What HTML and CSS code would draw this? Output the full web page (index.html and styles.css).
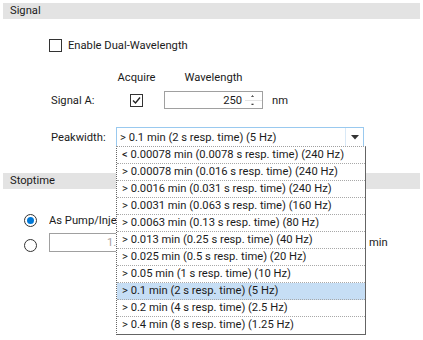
FILE: index.html
```html
<!DOCTYPE html>
<html lang="en">
<head>
    <meta charset="UTF-8">
    <title>Signal</title>
    <link rel="stylesheet" href="styles.css">
</head>
<body>
    <div class="section-head">Signal</div>
    <div class="signal-body">
        <div class="check-row">
            <span class="box"></span>
            <span class="check-label">Enable Dual-Wavelength</span>
        </div>

        <div class="col-heads">
            <span class="lbl"></span>
            <span class="acq">Acquire</span>
            <span class="wl">Wavelength</span>
        </div>

        <div class="sig-row">
            <span class="lbl">Signal A:</span>
            <span class="acq">
                <span class="box">
                    <svg width="11" height="11" viewBox="0 0 11 11"><path d="M2 5.5 L4.5 8 L9 2.5" fill="none" stroke="#222" stroke-width="1.4"/></svg>
                </span>
            </span>
            <div class="spin">
                <span class="spin-val">250</span>
                <span class="spin-btns">
                    <svg width="18" height="16" viewBox="0 0 18 16"><path d="M7.5 4.5 L8.5 3.5 L9.5 4.5 Z" fill="#333" stroke="#333" stroke-width="0.6"/><line x1="1" y1="8.5" x2="18" y2="8.5" stroke="#e3e3e3"/><path d="M7.5 12 L8.5 13 L9.5 12 Z" fill="#333" stroke="#333" stroke-width="0.6"/></svg>
                </span>
            </div>
            <span class="unit">nm</span>
        </div>

        <div class="peak-row">
            <span class="lbl">Peakwidth:</span>
            <div class="combo">
                <span class="combo-val">&gt; 0.1 min (2 s resp. time) (5 Hz)</span>
                <span class="combo-btn">
                    <svg width="8" height="5" viewBox="0 0 8 5"><path d="M0 0 H8 L4 4.5 Z" fill="#333"/></svg>
                </span>
                <ul class="combo-list">
                    <li>&lt; 0.00078 min (0.0078 s resp. time) (240 Hz)</li>
                    <li>&gt; 0.00078 min (0.016 s resp. time) (240 Hz)</li>
                    <li>&gt; 0.0016 min (0.031 s resp. time) (240 Hz)</li>
                    <li>&gt; 0.0031 min (0.063 s resp. time) (160 Hz)</li>
                    <li>&gt; 0.0063 min (0.13 s resp. time) (80 Hz)</li>
                    <li>&gt; 0.013 min (0.25 s resp. time) (40 Hz)</li>
                    <li>&gt; 0.025 min (0.5 s resp. time) (20 Hz)</li>
                    <li>&gt; 0.05 min (1 s resp. time) (10 Hz)</li>
                    <li class="selected">&gt; 0.1 min (2 s resp. time) (5 Hz)</li>
                    <li>&gt; 0.2 min (4 s resp. time) (2.5 Hz)</li>
                    <li>&gt; 0.4 min (8 s resp. time) (1.25 Hz)</li>
                </ul>
            </div>
        </div>
    </div>

    <div class="section-head stop-head">Stoptime</div>
    <div class="stop-body">
        <div class="radio-row">
            <span class="radio on"></span>
            <span class="radio-label">As Pump/Injector</span>
        </div>
        <div class="radio-row time-row">
            <span class="radio"></span>
            <div class="time-box"><span class="time-val">1.00</span></div>
            <span class="unit">min</span>
        </div>
    </div>
</body>
</html>
```

FILE: styles.css
```css
html {
    height: 100%;
}

body {
    margin: 0;
    min-height: 100%;
    padding-top: 3px;
    box-sizing: border-box;
    background-color: white;
    font-family: Roboto, "Liberation Sans", sans-serif;
    font-size: 11.2px;
    color: #1b1b1b;
}

.section-head {
    margin: 0 3px;
    height: 16px;
    line-height: 16px;
    padding-left: 7px;
    background-color: #e3e3e3;
}

.signal-body {
    padding-left: 49px;
}

.box {
    display: inline-flex;
    align-items: center;
    justify-content: center;
    width: 13px;
    height: 13px;
    box-sizing: border-box;
    border: 1px solid #333;
    background-color: white;
}

.check-row {
    display: flex;
    align-items: center;
    height: 13px;
    margin-top: 20px;
    line-height: 13px;
}

.check-label {
    margin-left: 6px;
}

.lbl {
    width: 68px;
    padding-left: 2px;
    box-sizing: border-box;
}

.acq {
    width: 39px;
    display: flex;
    justify-content: center;
}

.col-heads {
    display: flex;
    height: 14px;
    line-height: 14px;
    margin-top: 19px;
}

.wl {
    width: 99px;
    margin-left: 8px;
    text-align: center;
}

.sig-row {
    display: flex;
    align-items: center;
    height: 18px;
    margin-top: 6px;
}

.spin {
    display: flex;
    align-items: center;
    width: 99px;
    height: 18px;
    margin-left: 8px;
    box-sizing: border-box;
    border: 1px solid #a0a0a0;
}

.spin-val {
    flex: 1;
    text-align: right;
    padding-right: 2px;
}

.spin-btns {
    display: flex;
    width: 18px;
    height: 16px;
}

.unit {
    margin-left: 9px;
}

.peak-row {
    display: flex;
    align-items: center;
    height: 20px;
    margin-top: 18px;
}

.peak-row .lbl {
    width: 67px;
}

.combo {
    position: relative;
    display: flex;
    align-items: center;
    width: 248px;
    height: 20px;
    box-sizing: border-box;
    border: 1px solid #99c9ef;
}

.combo-val {
    flex: 1;
    padding-left: 3px;
}

.combo-btn {
    display: flex;
    align-items: center;
    justify-content: center;
    width: 17px;
    height: 18px;
    border-left: 1px solid #d9e9f7;
}

.combo-list {
    position: absolute;
    top: 100%;
    left: -1px;
    z-index: 2;
    width: 250px;
    margin: 0;
    padding: 0;
    list-style: none;
    box-sizing: border-box;
    background-color: white;
    border: 1px solid #646464;
    border-top: 1px dotted #a0a0a0;
    border-left-style: dotted;
}

.combo-list li {
    height: 17px;
    line-height: 16px;
    padding-left: 5px;
    box-sizing: border-box;
    border-bottom: 1px dotted #a8a8a8;
    white-space: nowrap;
}

.combo-list li:last-child {
    border-bottom: none;
}

.combo-list li.selected {
    background-color: #c6def5;
}

.stop-head {
    margin-top: 26px;
}

.stop-body {
    padding-left: 24px;
}

.radio-row {
    display: flex;
    align-items: center;
    height: 13px;
    line-height: 13px;
    margin-top: 25px;
}

.radio {
    position: relative;
    flex: none;
    width: 13px;
    height: 13px;
    box-sizing: border-box;
    border: 1px solid #333;
    border-radius: 50%;
}

.radio.on::after {
    content: "";
    position: absolute;
    left: 2px;
    top: 2px;
    width: 7px;
    height: 7px;
    border-radius: 50%;
    background-color: #0078d7;
}

/* the open list covers the rest of these */
.radio-label {
    width: 67px;
    margin-left: 12px;
    overflow: hidden;
    white-space: nowrap;
}

.time-row {
    align-items: flex-end;
    height: 19px;
    margin-top: 6px;
}

.time-box {
    flex: none;
    width: 313px;
    height: 19px;
    margin-left: 12px;
    box-sizing: border-box;
    border: 1px solid #a0a0a0;
    line-height: 17px;
}

.time-val {
    display: block;
    width: 66px;
    padding-left: 57px;
    box-sizing: border-box;
    overflow: hidden;
    white-space: nowrap;
    color: #a89fa0;
}

.time-row .unit {
    margin-left: 7px;
    align-self: center;
}
```
